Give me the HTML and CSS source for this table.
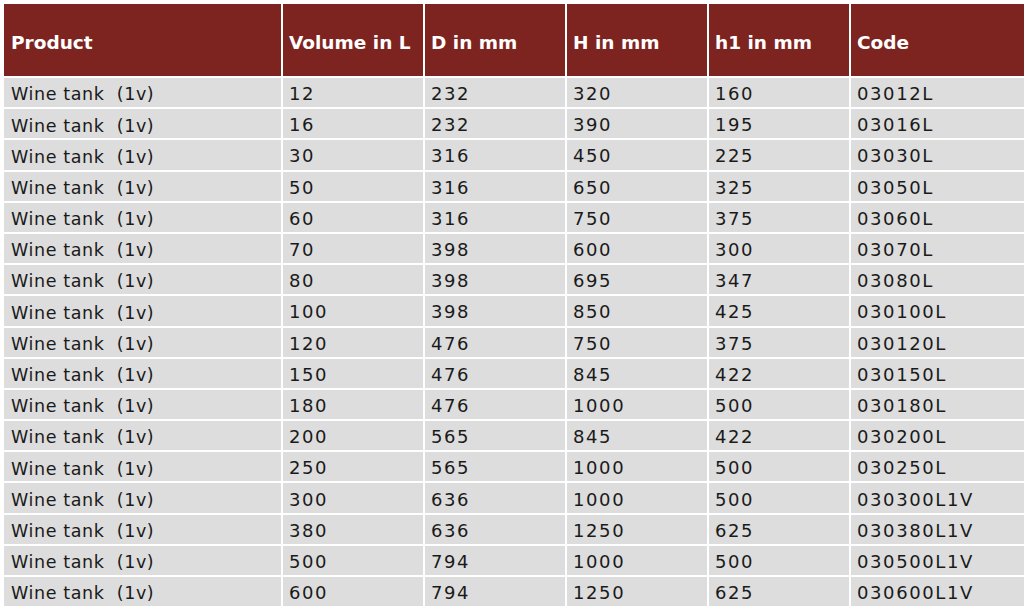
FILE: index.html
```html
<!DOCTYPE html>
<html>
<head>
<meta charset="utf-8">
<link rel="stylesheet" href="styles.css">
</head>
<body>
<table class="spec">
<colgroup>
<col class="c-prod"><col class="c-num"><col class="c-num"><col class="c-num"><col class="c-num"><col class="c-code">
</colgroup>
<thead>
<tr><th>Product</th><th>Volume in L</th><th>D in mm</th><th>H in mm</th><th>h1 in mm</th><th>Code</th></tr>
</thead>
<tbody>
<tr><td class="prod">Wine tank  (1v)</td><td>12</td><td>232</td><td>320</td><td>160</td><td>03012L</td></tr>
<tr><td class="prod">Wine tank  (1v)</td><td>16</td><td>232</td><td>390</td><td>195</td><td>03016L</td></tr>
<tr><td class="prod">Wine tank  (1v)</td><td>30</td><td>316</td><td>450</td><td>225</td><td>03030L</td></tr>
<tr><td class="prod">Wine tank  (1v)</td><td>50</td><td>316</td><td>650</td><td>325</td><td>03050L</td></tr>
<tr><td class="prod">Wine tank  (1v)</td><td>60</td><td>316</td><td>750</td><td>375</td><td>03060L</td></tr>
<tr><td class="prod">Wine tank  (1v)</td><td>70</td><td>398</td><td>600</td><td>300</td><td>03070L</td></tr>
<tr><td class="prod">Wine tank  (1v)</td><td>80</td><td>398</td><td>695</td><td>347</td><td>03080L</td></tr>
<tr><td class="prod">Wine tank  (1v)</td><td>100</td><td>398</td><td>850</td><td>425</td><td>030100L</td></tr>
<tr><td class="prod">Wine tank  (1v)</td><td>120</td><td>476</td><td>750</td><td>375</td><td>030120L</td></tr>
<tr><td class="prod">Wine tank  (1v)</td><td>150</td><td>476</td><td>845</td><td>422</td><td>030150L</td></tr>
<tr><td class="prod">Wine tank  (1v)</td><td>180</td><td>476</td><td>1000</td><td>500</td><td>030180L</td></tr>
<tr><td class="prod">Wine tank  (1v)</td><td>200</td><td>565</td><td>845</td><td>422</td><td>030200L</td></tr>
<tr><td class="prod">Wine tank  (1v)</td><td>250</td><td>565</td><td>1000</td><td>500</td><td>030250L</td></tr>
<tr><td class="prod">Wine tank  (1v)</td><td>300</td><td>636</td><td>1000</td><td>500</td><td>030300L1V</td></tr>
<tr><td class="prod">Wine tank  (1v)</td><td>380</td><td>636</td><td>1250</td><td>625</td><td>030380L1V</td></tr>
<tr><td class="prod">Wine tank  (1v)</td><td>500</td><td>794</td><td>1000</td><td>500</td><td>030500L1V</td></tr>
<tr><td class="prod">Wine tank  (1v)</td><td>600</td><td>794</td><td>1250</td><td>625</td><td>030600L1V</td></tr>
</tbody>
</table>
</body>
</html>
```

FILE: styles.css
```css
html, body {
  background: #ffffff;
}
body {
  margin: 2px;
  font-family: "DejaVu Sans", sans-serif;
}
.spec {
  width: 1024px;
  table-layout: fixed;
  border-collapse: separate;
  border-spacing: 2px;
}
.c-prod { width: 277px; }
.c-num { width: 140px; }
.c-code { width: 173px; }

.spec th {
  background: #7e2420;
  color: #ffffff;
  font-weight: bold;
  font-size: 18.5px;
  text-align: left;
  height: 72px;
  padding: 4px 0 0 6px;
  box-sizing: border-box;
  vertical-align: middle;
  white-space: nowrap;
  overflow: hidden;
}
.spec th:first-child {
  padding-left: 7px;
}
.spec td {
  background: #dddddd;
  color: #1a1a1a;
  font-size: 18px;
  letter-spacing: 1.6px;
  height: 29.2px;
  padding: 3px 0 0 6px;
  box-sizing: border-box;
  vertical-align: middle;
  white-space: pre;
  line-height: 1;
}
.spec td.prod {
  font-size: 17.5px;
  letter-spacing: 0.6px;
  padding-left: 7px;
  padding-top: 5px;
}
```
